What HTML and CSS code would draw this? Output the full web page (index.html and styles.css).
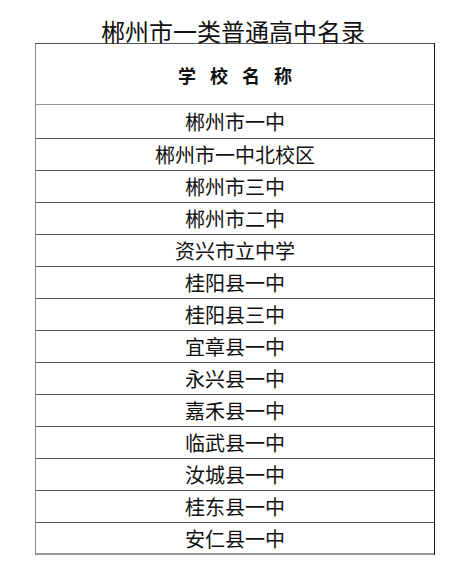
FILE: index.html
```html
<!DOCTYPE html>
<html lang="zh-CN">
<head>
<meta charset="utf-8">
<link rel="stylesheet" href="styles.css">
</head>
<body>
<div class="page">
  <h1 class="title">郴州市一类普通高中名录</h1>
  <div class="table">
    <div class="row head">学校名称</div>
    <div class="row first">郴州市一中</div>
    <div class="row">郴州市一中北校区</div>
    <div class="row">郴州市三中</div>
    <div class="row">郴州市二中</div>
    <div class="row">资兴市立中学</div>
    <div class="row">桂阳县一中</div>
    <div class="row">桂阳县三中</div>
    <div class="row">宜章县一中</div>
    <div class="row">永兴县一中</div>
    <div class="row">嘉禾县一中</div>
    <div class="row">临武县一中</div>
    <div class="row">汝城县一中</div>
    <div class="row">桂东县一中</div>
    <div class="row last">安仁县一中</div>
  </div>
</div>
</body>
</html>
```

FILE: styles.css
```css
html, body {
  margin: 0;
  padding: 0;
  background: #fff;
}
.page {
  width: 472px;
  height: 569px;
  font-family: "Noto Sans CJK SC", "Noto Sans", sans-serif;
  color: #111;
}
.title {
  margin: 0;
  padding-top: 19px;
  height: 24px;
  font-size: 24px;
  line-height: 24px;
  font-weight: 400;
  text-align: center;
  padding-left: 0;
  width: 466px;
}
.table {
  margin-left: 35px;
  width: 398px;
  border-top: 1px solid #555;
  border-left: 1px solid #888;
  border-right: 1px solid #111;
  display: flex;
  flex-direction: column;
}
.row {
  height: 31px;
  border-bottom: 1px solid #555;
  display: flex;
  align-items: center;
  justify-content: center;
  font-size: 20px;
  line-height: 1;
  padding-top: 1px;
  box-sizing: content-box;
  height: 30px;
}
.row.head {
  height: 59px;
  font-size: 18px;
  font-weight: 700;
  letter-spacing: 14px;
  text-indent: 14px;
  border-bottom-color: #999;
}
.row.first {
  height: 32px;
}
.row.last {
  height: 29px;
  border-bottom: 2px solid #999;
}
```
